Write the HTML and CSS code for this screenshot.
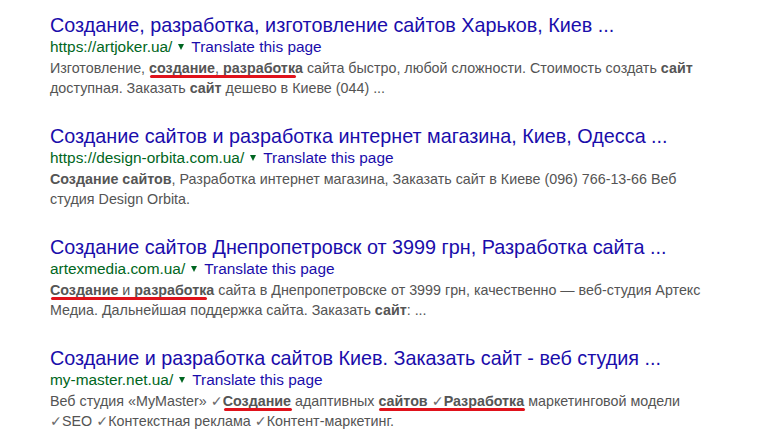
FILE: index.html
```html
<!DOCTYPE html>
<html lang="ru">
<head>
	<meta charset="UTF-8">
	<meta name="viewport" content="width=device-width, initial-scale=1.0">
	<title>Создание сайтов - результаты поиска</title>
	<link rel="stylesheet" href="styles.css">
</head>
<body>
	<div class="results">
		<!-- artjoker -->
		<div class="result">
			<a class="title" href="#">Создание, разработка, изготовление сайтов Харьков, Киев ...</a>
			<div class="url">https://artjoker.ua/<span class="arrow"></span><a class="translate" href="#">Translate this page</a></div>
			<div class="snippet">Изготовление, <span class="mark short"><b>создание</b>, <b>разработка</b></span> сайта быстро, любой сложности. Стоимость создать <b>сайт</b><br>доступная. Заказать <b>сайт</b> дешево в Киеве (044) ...</div>
		</div>

		<!-- design orbita -->
		<div class="result">
			<a class="title" href="#">Создание сайтов и разработка интернет магазина, Киев, Одесса ...</a>
			<div class="url">https://design-orbita.com.ua/<span class="arrow"></span><a class="translate" href="#">Translate this page</a></div>
			<div class="snippet"><b>Создание сайтов</b>, Разработка интернет магазина, Заказать сайт в Киеве (096) 766-13-66 Веб<br>студия Design Orbita.</div>
		</div>

		<!-- artexmedia -->
		<div class="result">
			<a class="title" href="#">Создание сайтов Днепропетровск от 3999 грн, Разработка сайта ...</a>
			<div class="url">artexmedia.com.ua/<span class="arrow"></span><a class="translate" href="#">Translate this page</a></div>
			<div class="snippet"><span class="mark short"><b>Создание</b> и <b>разработка</b></span> сайта в Днепропетровске от 3999 грн, качественно — веб-студия Артекс<br>Медиа. Дальнейшая поддержка сайта. Заказать <b>сайт</b>: ...</div>
		</div>

		<!-- my-master -->
		<div class="result">
			<a class="title" href="#">Создание и разработка сайтов Киев. Заказать сайт - веб студия ...</a>
			<div class="url">my-master.net.ua/<span class="arrow"></span><a class="translate" href="#">Translate this page</a></div>
			<div class="snippet">Веб студия «MyMaster» <span class="check">✓</span><span class="mark"><b>Создание</b></span> адаптивных <span class="mark"><b>сайтов</b> <span class="check">✓</span><b>Разработка</b></span> маркетинговой модели<br><span class="check">✓</span>SEO <span class="check">✓</span>Контекстная реклама <span class="check">✓</span>Контент-маркетинг.</div>
		</div>
	</div>
</body>
</html>
```

FILE: styles.css
```css
body {
	margin: 0;
	background: #fff;
	font-family: "Liberation Sans", Arial, sans-serif;
}
.results {
	padding: 14px 0 0 50px;
}
.result {
	margin-bottom: 27px;
}
.result:last-child {
	margin-bottom: 0;
}
.title {
	display: block;
	font-size: 19.8px;
	line-height: 22px;
	color: #1a0dab;
	text-decoration: none;
	white-space: nowrap;
}
.url {
	font-size: 15.4px;
	line-height: 22px;
	color: #006621;
	white-space: nowrap;
}
.arrow {
	display: inline-block;
	width: 0;
	height: 0;
	margin: 0 7px 2px 6px;
	border-top: 6px solid #006621;
	border-left: 3.5px solid transparent;
	border-right: 3.5px solid transparent;
	vertical-align: middle;
}
.translate {
	color: #1a0dab;
	text-decoration: none;
}
.snippet {
	font-size: 14.3px;
	line-height: 20px;
	color: #545454;
	white-space: nowrap;
}
.snippet b {
	color: #555;
}
.check {
	font-family: "DejaVu Sans", sans-serif;
	font-weight: normal;
	color: #6a6a6a;
}
.mark {
	position: relative;
}
.mark::after {
	content: "";
	position: absolute;
	left: 1px;
	right: -1px;
	bottom: -2px;
	height: 3px;
	border-radius: 2px;
	background: #e0121b;
}
.mark.short::after {
	right: 7px;
}
```
